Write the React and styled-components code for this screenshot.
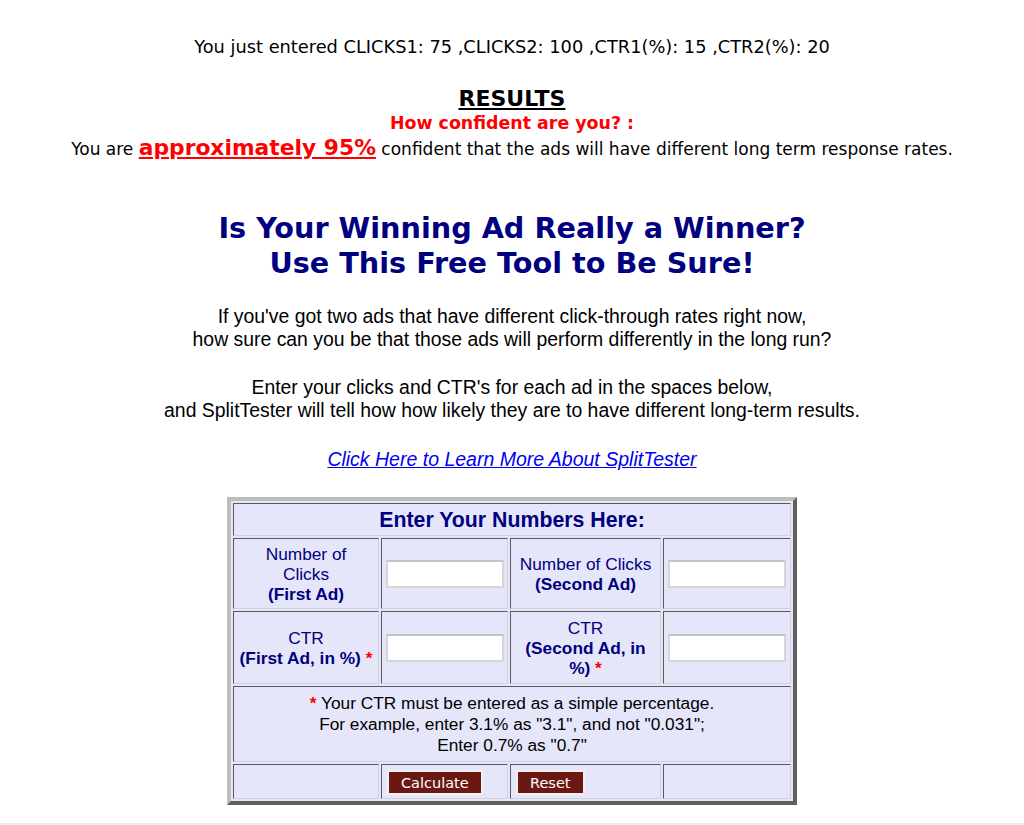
import React from 'react';
import styled, { createGlobalStyle } from 'styled-components';

const GlobalStyle = createGlobalStyle`
  html, body {
    margin: 0;
    padding: 0;
    background: #fff;
  }
  body {
    font-family: "DejaVu Sans", Verdana, sans-serif;
    color: #000;
  }
`;

const Page = styled.div`
  display: flex;
  flex-direction: column;
  align-items: center;
  text-align: center;
  padding-top: 36px;
`;

const EnteredLine = styled.div`
  font-size: 17.8px;
  line-height: 22px;
`;

const ResultsTitle = styled.div`
  margin-top: 29px;
  font-size: 22px;
  line-height: 24px;
  font-weight: bold;
  text-decoration: underline;
`;

const Question = styled.div`
  margin-top: 1px;
  color: #ff0000;
  font-size: 17.4px;
  line-height: 22px;
  font-weight: bold;
`;

const Confidence = styled.div`
  font-size: 17px;
  line-height: 28px;
  white-space: nowrap;
`;

const Highlight = styled.span`
  color: #ff0000;
  font-size: 21.8px;
  font-weight: bold;
  text-decoration: underline;
`;

const Headline = styled.h1`
  margin: 48px 0 0;
  color: #000080;
  font-size: 28.7px;
  line-height: 35px;
  font-weight: bold;
  white-space: nowrap;
`;

const Paragraph = styled.p`
  margin: ${({ $top }) => $top}px 0 0;
  font-family: "Liberation Sans", Arial, sans-serif;
  font-size: 19.4px;
  line-height: 23px;
  white-space: nowrap;
`;

const LearnLink = styled.a`
  display: block;
  margin-top: 26px;
  font-family: "Liberation Sans", Arial, sans-serif;
  font-size: 19.5px;
  line-height: 22px;
  font-style: italic;
  color: #0000ee;
  text-decoration: underline;
`;

const FormTable = styled.table`
  margin-top: 27px;
  width: 570px;
  border-collapse: separate;
  border-spacing: 2px;
  background: #e6e6fa;
  border-style: solid;
  border-width: 4px;
  border-color: #bdbdbd #5f5f5f #5f5f5f #bdbdbd;
  font-family: "Liberation Sans", Arial, sans-serif;
`;

const Row = styled.tr`
  height: ${({ $h }) => $h}px;
`;

const Cell = styled.td`
  padding: 2px 2px;
  border-style: solid;
  border-width: 1px;
  border-color: #5a5a5a #d2d2d8 #d2d2d8 #5a5a5a;
  width: ${({ $w }) => ($w ? `${$w}px` : 'auto')};
  text-align: ${({ $align }) => $align || 'center'};
  vertical-align: middle;
  color: ${({ $dark }) => ($dark ? '#000' : '#000080')};
  font-size: 17.3px;
  line-height: ${({ $dark }) => ($dark ? '21px' : '20px')};
`;

const HeaderCell = styled(Cell)`
  font-size: 21.3px;
  font-weight: bold;
`;

const Bold = styled.b`
  font-weight: bold;
`;

const Star = styled.span`
  color: #ff0000;
  font-weight: bold;
`;

const NumberInput = styled.input`
  box-sizing: border-box;
  display: block;
  width: 118px;
  height: 28px;
  margin: 0 0 0 2px;
  background: #fff;
  border: 2px solid #d6d6d6;
  border-top-color: #c4c4c4;
  font-size: 14px;
`;

const ButtonCell = styled(Cell)`
  vertical-align: bottom;
  padding-bottom: 3px;
`;

const Button = styled.button`
  display: inline-block;
  margin-left: 3px;
  padding: 0 12px;
  height: 25px;
  background: #6b1813;
  color: #fff;
  border: 2px solid #f4f0f0;
  font-family: "DejaVu Sans", Verdana, sans-serif;
  font-size: 14.5px;
  cursor: pointer;
`;

const BottomBand = styled.div`
  margin-top: 18px;
  height: 10px;
  width: 100%;
  background: #ececec;
`;

function App() {
  return (
    <>
      <GlobalStyle />
      <Page>
        <EnteredLine>
          You just entered CLICKS1: 75 ,CLICKS2: 100 ,CTR1(%): 15 ,CTR2(%): 20
        </EnteredLine>
        <ResultsTitle>RESULTS</ResultsTitle>
        <Question>How confident are you? :</Question>
        <Confidence>
          You are <Highlight>approximately 95%</Highlight> confident that the ads will have
          different long term response rates.
        </Confidence>

        <Headline>
          Is Your Winning Ad Really a Winner?
          <br />
          Use This Free Tool to Be Sure!
        </Headline>

        <Paragraph $top={24}>
          If you've got two ads that have different click-through rates right now,
          <br />
          how sure can you be that those ads will perform differently in the long run?
        </Paragraph>
        <Paragraph $top={25}>
          Enter your clicks and CTR's for each ad in the spaces below,
          <br />
          and SplitTester will tell how how likely they are to have different long-term results.
        </Paragraph>

        <LearnLink href="#">Click Here to Learn More About SplitTester</LearnLink>

        <form onSubmit={(e) => e.preventDefault()}>
          <FormTable>
            <tbody>
              <Row $h={33}>
                <HeaderCell colSpan={4}>Enter Your Numbers Here:</HeaderCell>
              </Row>
              <Row $h={71}>
                <Cell $w={140}>
                  Number of
                  <br />
                  Clicks
                  <br />
                  <Bold>(First Ad)</Bold>
                </Cell>
                <Cell $w={121} $align="left">
                  <NumberInput type="text" name="clicks1" />
                </Cell>
                <Cell $w={145}>
                  Number of Clicks
                  <br />
                  <Bold>(Second Ad)</Bold>
                </Cell>
                <Cell $w={122} $align="left">
                  <NumberInput type="text" name="clicks2" />
                </Cell>
              </Row>
              <Row $h={73}>
                <Cell>
                  CTR
                  <br />
                  <Bold>(First Ad, in %)</Bold> <Star>*</Star>
                </Cell>
                <Cell $align="left">
                  <NumberInput type="text" name="ctr1" />
                </Cell>
                <Cell>
                  CTR
                  <br />
                  <Bold>(Second Ad, in</Bold>
                  <br />
                  <Bold>%)</Bold> <Star>*</Star>
                </Cell>
                <Cell $align="left">
                  <NumberInput type="text" name="ctr2" />
                </Cell>
              </Row>
              <Row $h={76}>
                <Cell colSpan={4} $dark>
                  <Star>*</Star> Your CTR must be entered as a simple percentage.
                  <br />
                  For example, enter 3.1% as "3.1", and not "0.031";
                  <br />
                  Enter 0.7% as "0.7"
                </Cell>
              </Row>
              <Row $h={35}>
                <ButtonCell />
                <ButtonCell $align="left">
                  <Button type="submit">Calculate</Button>
                </ButtonCell>
                <ButtonCell $align="left">
                  <Button type="reset">Reset</Button>
                </ButtonCell>
                <ButtonCell />
              </Row>
            </tbody>
          </FormTable>
        </form>
        <BottomBand />
      </Page>
    </>
  );
}

export default App;
